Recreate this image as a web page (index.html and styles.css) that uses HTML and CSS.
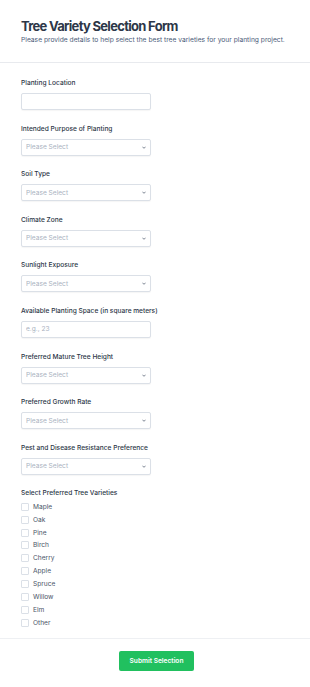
FILE: index.html
```html
<!DOCTYPE html>
<html lang="en">

<head>
    <meta charset="UTF-8">
    <meta name="viewport" content="width=device-width, initial-scale=1.0">
    <title>Tree Variety Selection Form</title>
    <link rel="stylesheet" href="styles.css">
</head>

<body>

    <div class="header">
        <h1>Tree Variety Selection Form</h1>
        <p>Please provide details to help select the best tree varieties for your planting project.</p>
    </div>

    <form class="form">
        <div class="field">
            <label for="location">Planting Location</label>
            <input type="text" id="location">
        </div>

        <div class="field">
            <label>Intended Purpose of Planting</label>
            <div class="select-wrap">
                <select><option>Please Select</option></select>
                <svg class="chev" viewBox="0 0 10 6"><path d="M1 1l4 4 4-4" /></svg>
            </div>
        </div>

        <div class="field">
            <label>Soil Type</label>
            <div class="select-wrap">
                <select><option>Please Select</option></select>
                <svg class="chev" viewBox="0 0 10 6"><path d="M1 1l4 4 4-4" /></svg>
            </div>
        </div>

        <div class="field">
            <label>Climate Zone</label>
            <div class="select-wrap">
                <select><option>Please Select</option></select>
                <svg class="chev" viewBox="0 0 10 6"><path d="M1 1l4 4 4-4" /></svg>
            </div>
        </div>

        <div class="field">
            <label>Sunlight Exposure</label>
            <div class="select-wrap">
                <select><option>Please Select</option></select>
                <svg class="chev" viewBox="0 0 10 6"><path d="M1 1l4 4 4-4" /></svg>
            </div>
        </div>

        <div class="field">
            <label for="space">Available Planting Space (in square meters)</label>
            <input type="text" id="space" placeholder="e.g., 23">
        </div>

        <div class="field">
            <label>Preferred Mature Tree Height</label>
            <div class="select-wrap">
                <select><option>Please Select</option></select>
                <svg class="chev" viewBox="0 0 10 6"><path d="M1 1l4 4 4-4" /></svg>
            </div>
        </div>

        <div class="field">
            <label>Preferred Growth Rate</label>
            <div class="select-wrap">
                <select><option>Please Select</option></select>
                <svg class="chev" viewBox="0 0 10 6"><path d="M1 1l4 4 4-4" /></svg>
            </div>
        </div>

        <div class="field">
            <label>Pest and Disease Resistance Preference</label>
            <div class="select-wrap">
                <select><option>Please Select</option></select>
                <svg class="chev" viewBox="0 0 10 6"><path d="M1 1l4 4 4-4" /></svg>
            </div>
        </div>

        <div class="field">
            <label>Select Preferred Tree Varieties</label>
            <div class="checks">
                <label class="check"><input type="checkbox"> Maple</label>
                <label class="check"><input type="checkbox"> Oak</label>
                <label class="check"><input type="checkbox"> Pine</label>
                <label class="check"><input type="checkbox"> Birch</label>
                <label class="check"><input type="checkbox"> Cherry</label>
                <label class="check"><input type="checkbox"> Apple</label>
                <label class="check"><input type="checkbox"> Spruce</label>
                <label class="check"><input type="checkbox"> Willow</label>
                <label class="check"><input type="checkbox"> Elm</label>
                <label class="check"><input type="checkbox"> Other</label>
            </div>
        </div>
    </form>

    <div class="footer">
        <button type="button" class="submit-btn">Submit Selection</button>
    </div>

</body>

</html>
```

FILE: styles.css
```css
body {
    font-family: Inter, "Noto Sans", sans-serif;
    background: #fff;
    color: #2d3748;
    margin: 0;
    padding: 0;
}

.header {
    padding: 18px 21px 17px;
    border-bottom: 1px solid #e8eaee;
}

.header h1 {
    margin: 0;
    font-size: 13px;
    line-height: 17px;
    font-weight: 700;
    letter-spacing: -0.7px;
    color: #2d3748;
}

.header p {
    margin: 1px 0 0;
    font-size: 6.7px;
    line-height: 9px;
    color: #4a5a78;
}

.form {
    padding: 15px 21px 8.5px;
    border-bottom: 1px solid #eef0f3;
}

.field {
    display: flex;
    flex-direction: column;
    align-items: flex-start;
    margin-bottom: 13.6px;
}

.field:last-child {
    margin-bottom: 0;
}

.field > label {
    font-size: 6.6px;
    line-height: 10px;
    font-weight: 500;
    color: #2d3748;
    margin-bottom: 5px;
}

.field input[type="text"],
.field select {
    display: block;
    box-sizing: border-box;
    width: 130px;
    height: 17px;
    margin: 0;
    padding: 0 4px;
    border: 1px solid #dbe0e7;
    border-radius: 2px;
    background: #fff;
    font-family: inherit;
    font-size: 6.6px;
    color: #a9b2c0;
    box-shadow: 0 1px 1px rgba(0, 0, 0, 0.04);
    outline: none;
}

.field input::placeholder {
    color: #a9b2c0;
}

.field select {
    appearance: none;
    -webkit-appearance: none;
}

.select-wrap {
    position: relative;
}

.chev {
    position: absolute;
    right: 5px;
    top: 7px;
    width: 4px;
    height: 3px;
    fill: none;
    stroke: #4a5568;
    stroke-width: 1.8;
}

.checks {
    display: flex;
    flex-direction: column;
    margin-top: -3px;
}

.check {
    display: flex;
    align-items: center;
    gap: 4px;
    height: 12.9px;
    font-size: 6.6px;
    color: #4a5568;
}

.check input {
    appearance: none;
    -webkit-appearance: none;
    margin: 0;
    width: 8px;
    height: 8px;
    border: 1px solid #dbe0e7;
    border-radius: 1px;
    background: #fff;
    box-sizing: border-box;
}

.footer {
    display: flex;
    justify-content: center;
    padding: 12px 0 16px;
}

.submit-btn {
    background: #21c05f;
    border: none;
    color: white;
    width: 75px;
    height: 20px;
    padding: 0;
    font-family: inherit;
    font-size: 6.6px;
    font-weight: 600;
    border-radius: 2px;
    cursor: pointer;
    margin-left: 3px;
}
```
